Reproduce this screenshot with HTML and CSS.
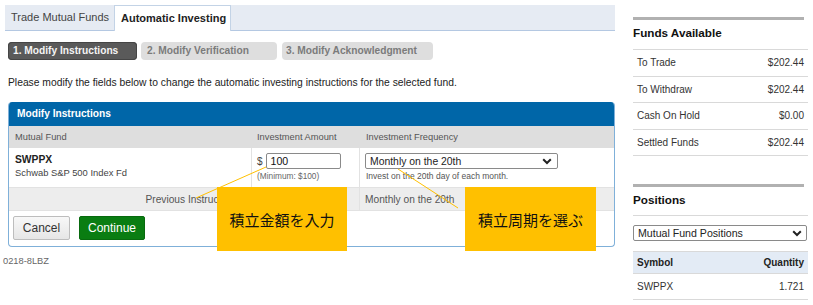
FILE: index.html
```html
<!DOCTYPE html>
<html lang="en">
<head>
<meta charset="utf-8">
<title>Automatic Investing</title>
<link rel="stylesheet" href="styles.css">
</head>
<body>
<div class="page">
  <div class="main">
    <div class="tabs">
      <div class="tab">Trade Mutual Funds</div>
      <div class="tab tab-active">Automatic Investing</div>
    </div>
    <div class="steps">
      <div class="step step-1 step-current">1. Modify Instructions</div>
      <div class="step step-2">2. Modify Verification</div>
      <div class="step step-3">3. Modify Acknowledgment</div>
    </div>
    <p class="intro">Please modify the fields below to change the automatic investing instructions for the selected fund.</p>
    <div class="panel">
      <div class="panel-head">Modify Instructions</div>
      <div class="grid">
        <div class="th">Mutual Fund</div>
        <div class="th">Investment Amount</div>
        <div class="th">Investment Frequency</div>

        <div class="td fund">
          <div class="sym">SWPPX</div>
          <div class="fname">Schwab S&amp;P 500 Index Fd</div>
        </div>
        <div class="td amount">
          <div class="amount-line"><span class="dollar">$</span><div class="input">100</div></div>
          <div class="hint">(Minimum: $100)</div>
        </div>
        <div class="td freq">
          <div class="select select-freq">
            <span>Monthly on the 20th</span>
            <svg class="chev" width="10" height="7" viewBox="0 0 10 7"><path d="M1.2 1.2 L5 5 L8.8 1.2" fill="none" stroke="#222" stroke-width="2"/></svg>
          </div>
          <div class="hint">Invest on the 20th day of each month.</div>
        </div>

        <div class="prev prev-label">Previous Instructions</div>
        <div class="prev"></div>
        <div class="prev prev-val">Monthly on the 20th</div>
      </div>
      <div class="buttons">
        <button class="btn btn-cancel">Cancel</button>
        <button class="btn btn-continue">Continue</button>
      </div>
    </div>
    <div class="code">0218-8LBZ</div>
  </div>

  <div class="side">
    <div class="bar"></div>
    <h3 class="side-title">Funds Available</h3>
    <div class="funds">
      <div class="frow"><span>To Trade</span><span>$202.44</span></div>
      <div class="frow"><span>To Withdraw</span><span>$202.44</span></div>
      <div class="frow"><span>Cash On Hold</span><span>$0.00</span></div>
      <div class="frow"><span>Settled Funds</span><span>$202.44</span></div>
    </div>
    <div class="bar bar-2"></div>
    <h3 class="side-title pos-title">Positions</h3>
    <div class="select select-pos">
      <span>Mutual Fund Positions</span>
      <svg class="chev" width="10" height="7" viewBox="0 0 10 7"><path d="M1.2 1.2 L5 5 L8.8 1.2" fill="none" stroke="#222" stroke-width="2"/></svg>
    </div>
    <div class="ptable">
      <div class="prow phead"><span>Symbol</span><span>Quantity</span></div>
      <div class="prow"><span>SWPPX</span><span>1.721</span></div>
    </div>
  </div>

  <svg class="callout-lines" width="813" height="305" viewBox="0 0 813 305">
    <line x1="266" y1="167" x2="196" y2="198" stroke="#ffc000" stroke-width="1"/>
    <line x1="398" y1="169" x2="458" y2="208" stroke="#ffc000" stroke-width="1"/>
  </svg>
  <div class="callout callout-1">積立金額を入力</div>
  <div class="callout callout-2">積立周期を選ぶ</div>
</div>
</body>
</html>
```
FILE: styles.css
```css
* { box-sizing: border-box; }
body {
  margin: 0;
  font-family: "Liberation Sans", Arial, sans-serif;
  color: #333;
  background: #fff;
}
.page {
  position: relative;
  display: flex;
  align-items: flex-start;
  width: 813px;
  height: 305px;
  overflow: hidden;
}
.main {
  width: 610px;
  margin-left: 5px;
}
/* Tabs */
.tabs {
  display: flex;
  height: 26px;
  margin-top: 5px;
  background: #e6ebf3;
  border-bottom: 1px solid #b4c8e2;
}
.tab {
  height: 25px;
  line-height: 25px;
  font-size: 11px;
  color: #444;
  padding: 0 0 0 6px;
  width: 109px;
  white-space: nowrap;
}
.tab-active {
  width: 117px;
  height: 26px;
  background: #fff;
  border: 1px solid #c3d3e6;
  border-bottom: none;
  font-weight: bold;
  color: #222;
  padding-left: 6px;
  line-height: 25px;
}
/* Steps */
.steps {
  display: flex;
  margin: 11px 0 0 3px;
}
.step {
  height: 18px;
  line-height: 18px;
  border-radius: 4px;
  font-size: 10.2px;
  font-weight: bold;
  color: #7b7b7b;
  background: #dedede;
  padding-left: 5px;
  white-space: nowrap;
}
.step-1 { width: 129px; }
.step-2 { width: 136px; margin-left: 4px; padding-left: 6px; }
.step-3 { width: 151px; margin-left: 5px; padding-left: 4px; }
.step-current {
  background: #5a5a5a;
  color: #f4f4f4;
  box-shadow: inset 0 0 0 1px #454545;
}
/* Intro */
.intro {
  margin: 17px 0 0 3px;
  font-size: 10.3px;
  line-height: 12px;
  color: #222;
}
/* Panel */
.panel {
  margin: 13px 0 0 3px;
  width: 607px;
  border: 1px solid #7fb0d9;
  border-top: none;
  border-radius: 4px;
  overflow: hidden;
}
.panel-head {
  height: 24px;
  line-height: 24px;
  background: #0066a8;
  color: #fff;
  font-weight: bold;
  font-size: 10.2px;
  padding-left: 8px;
}
.grid {
  display: grid;
  grid-template-columns: 243px 108px 1fr;
}
.th {
  height: 22px;
  line-height: 22px;
  background: #dedede;
  color: #555;
  font-size: 9.3px;
  padding-left: 6px;
}
.th:nth-child(2) { padding-left: 5px; }
.td {
  height: 39px;
  border-right: 1px solid #e2e2e2;
  padding-left: 6px;
}
.td:nth-child(6) { border-right: none; }
.fund { padding-top: 6px; }
.sym {
  font-weight: bold;
  font-size: 10.3px;
  color: #222;
  line-height: 12px;
}
.fname {
  font-size: 9.4px;
  color: #444;
  line-height: 12px;
  margin-top: 1px;
}
.amount, .freq { padding-top: 5px; padding-left: 5px; }
.amount-line {
  display: flex;
  align-items: center;
  height: 16px;
}
.dollar {
  font-size: 10px;
  color: #444;
  margin-right: 3px;
}
.input {
  width: 75px;
  height: 16px;
  border: 1px solid #8a8a8a;
  border-radius: 2px;
  font-size: 10.6px;
  line-height: 14px;
  padding-left: 4px;
  color: #111;
}
.hint {
  font-size: 8.3px;
  color: #666;
  margin-top: 2px;
  line-height: 10px;
  white-space: nowrap;
}
.select {
  display: flex;
  align-items: center;
  justify-content: space-between;
  height: 16px;
  border: 1px solid #8a8a8a;
  border-radius: 2px;
  background: #fff;
  font-size: 10.4px;
  color: #222;
  padding: 0 5px 0 4px;
}
.select-freq { width: 193px; }
.freq .hint { margin-left: 1px; color: #555; font-size: 8.5px; }
.chev { display: block; }
.prev {
  height: 23px;
  line-height: 23px;
  background: #ededed;
  border-top: 1px solid #e2e2e2;
  font-size: 10.2px;
  color: #555;
}
.prev-label {
  text-align: right;
  padding-right: 12px;
}
.prev:nth-child(8) { border-left: 1px solid #e2e2e2; border-right: 1px solid #e2e2e2; }
.prev-val { padding-left: 5px; }
.buttons {
  display: flex;
  gap: 9px;
  height: 36px;
  border-top: 1px solid #e2e2e2;
  padding: 5px 0 0 4px;
}
.btn {
  height: 24px;
  font-family: "Liberation Sans", Arial, sans-serif;
  font-size: 12px;
  border-radius: 2px;
  padding: 0;
  cursor: pointer;
}
.btn-cancel {
  width: 57px;
  color: #333;
  background: linear-gradient(#f8f8f8, #e6e6e6);
  border: 1px solid #bdbdbd;
}
.btn-continue {
  width: 66px;
  color: #fff;
  background: #0a7d12;
  border: 1px solid #086a0e;
}
.code {
  margin: 8px 0 0 -2px;
  font-size: 9.3px;
  line-height: 12px;
  color: #666;
}
/* Sidebar */
.side {
  width: 175px;
  margin-left: 18px;
}
.bar {
  width: 171px;
  height: 3px;
  background: #b1b1b1;
  margin-top: 17px;
}
.side-title {
  margin: 5px 0 0 0;
  font-size: 11.7px;
  line-height: 16px;
  color: #111;
  font-weight: bold;
}
.funds { margin-top: 8px; border-bottom: 1px solid #d9d9d9; }
.frow {
  display: flex;
  justify-content: space-between;
  height: 26.5px;
  line-height: 25px;
  border-top: 1px solid #d9d9d9;
  font-size: 10px;
  color: #333;
  padding: 0 4px;
}
.bar-2 { margin-top: 28px; }
.pos-title {
  border-bottom: 1px solid #d9d9d9;
  padding-bottom: 7px;
}
.select-pos {
  margin-top: 9px;
  width: 174px;
  height: 16px;
  font-size: 10.6px;
  padding: 0 4px 0 4px;
}
.ptable { margin-top: 10px; }
.prow {
  display: flex;
  justify-content: space-between;
  height: 26px;
  line-height: 25px;
  border-bottom: 1px solid #d9d9d9;
  font-size: 10px;
  color: #333;
  padding: 0 4px;
}
.phead {
  height: 23px;
  line-height: 21px;
  background: #e3ebf5;
  border-top: 1px solid #d9d9d9;
  font-weight: bold;
  color: #222;
}
/* Callouts (annotation overlay) */
.callout-lines {
  position: absolute;
  left: 0;
  top: 0;
  pointer-events: none;
}
.callout {
  position: absolute;
  top: 187px;
  width: 130px;
  height: 64px;
  display: flex;
  align-items: center;
  justify-content: center;
  background: #ffc000;
  color: #111;
  font-family: "Noto Sans CJK JP", "Noto Sans", sans-serif;
  font-size: 15px;
  letter-spacing: 0;
}
.callout-1 { left: 217px; }
.callout-2 { left: 465px; width: 131px; }
```
